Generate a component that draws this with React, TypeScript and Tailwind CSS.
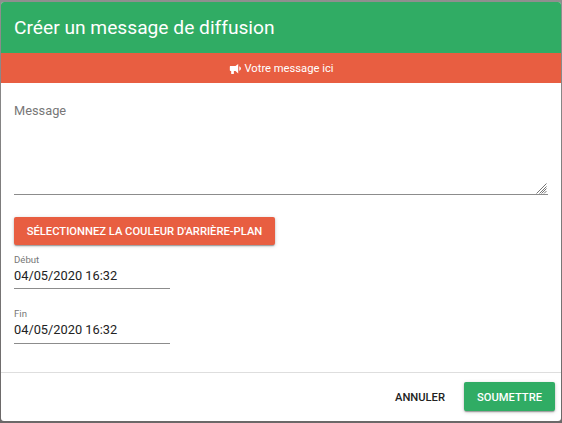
import type { ReactNode } from "react";

function Bullhorn() {
  return (
    <svg viewBox="0 0 24 24" className="mr-[3px] size-[13px]" fill="currentColor" aria-hidden="true">
      <path d="M12,7.5H2.5A1.5,1.5 0 0,0 1.5,9V15A1.5,1.5 0 0,0 3,16.5H4V21A1,1 0 0,0 5,22H8A1,1 0 0,0 9,21V16.5H12L17,21V3.5L12,7.5M22,12C22,13.9 20.8,15.4 19,16.2V7.8C20.8,8.6 22,10.1 22,12Z" />
    </svg>
  );
}

function ResizeGrip() {
  return (
    <svg viewBox="0 0 11 11" className="size-[11px]" stroke="#777" strokeWidth="1" fill="none" aria-hidden="true">
      <path d="M0.5 10.5L10.5 0.5M3.5 10.5L10.5 3.5M5.5 10.5L10.5 5.5M8 10.5L10.5 8" />
    </svg>
  );
}

function DateField({ label, value, className }: { label: string; value: string; className: string }) {
  return (
    <label className={`flex w-[156px] flex-col border-b border-[#8c8c8c] ${className}`}>
      <span className="text-[9.6px] leading-3 text-[#777]">{label}</span>
      <span className="text-[12.8px] leading-[20px] text-[#222]">{value}</span>
    </label>
  );
}

function RaisedButton({ children, className }: { children: ReactNode; className: string }) {
  return (
    <button
      type="button"
      className={`flex items-center justify-center rounded-[2px] text-[11.2px] font-medium text-white shadow-[0_2px_1px_-1px_rgba(0,0,0,.2),0_1px_2px_rgba(0,0,0,.2),0_1px_4px_rgba(0,0,0,.15)] ${className}`}
    >
      {children}
    </button>
  );
}

export default function App() {
  return (
    <main className="h-[423px] w-[562px] bg-[linear-gradient(#8f8f8f,#6b6868)] px-px pt-0.5 pb-0.5 font-['Roboto',sans-serif]">
      <section className="flex h-[419px] flex-col overflow-hidden rounded-[3px] bg-white">
        <header className="flex h-[51px] items-center bg-[#30ac64] px-[13px] pt-0.5 text-[19.2px] text-white">
          <h1>Créer un message de diffusion</h1>
        </header>
        <div className="flex h-[30px] items-center justify-center bg-[#e85e41] pt-px text-[11.2px] text-white">
          <Bullhorn />
          <span className="pt-px">Votre message ici</span>
        </div>
        <div className="flex h-[290px] flex-col items-start border-b border-[#dedede] px-[13px] pt-[18px]">
          <div className="flex h-[94px] w-[534px] justify-between border-b border-[#8c8c8c]">
            <span className="text-[12.8px] leading-5 text-[#777]">Message</span>
            <span className="mr-px self-end"><ResizeGrip /></span>
          </div>
          <RaisedButton className="mt-[22px] h-7 w-[261px] bg-[#e85e41] pt-0.5">SÉLECTIONNEZ LA COULEUR D'ARRIÈRE-PLAN</RaisedButton>
          <div className="mt-[9px] flex flex-col gap-[19px]">
            <DateField label="Début" value="04/05/2020 16:32" className="h-[35px]" />
            <DateField label="Fin" value="04/05/2020 16:32" className="h-[36px]" />
          </div>
        </div>
        <footer className="flex h-12 items-start justify-end pt-[9px] pr-1.5">
          <button type="button" className="mr-[19px] h-[29px] pt-[3px] text-[11.2px] font-medium text-[#222]">ANNULER</button>
          <RaisedButton className="h-[29px] w-[91px] bg-[#30ac64] pt-[3px]">SOUMETTRE</RaisedButton>
        </footer>
      </section>
    </main>
  );
}
